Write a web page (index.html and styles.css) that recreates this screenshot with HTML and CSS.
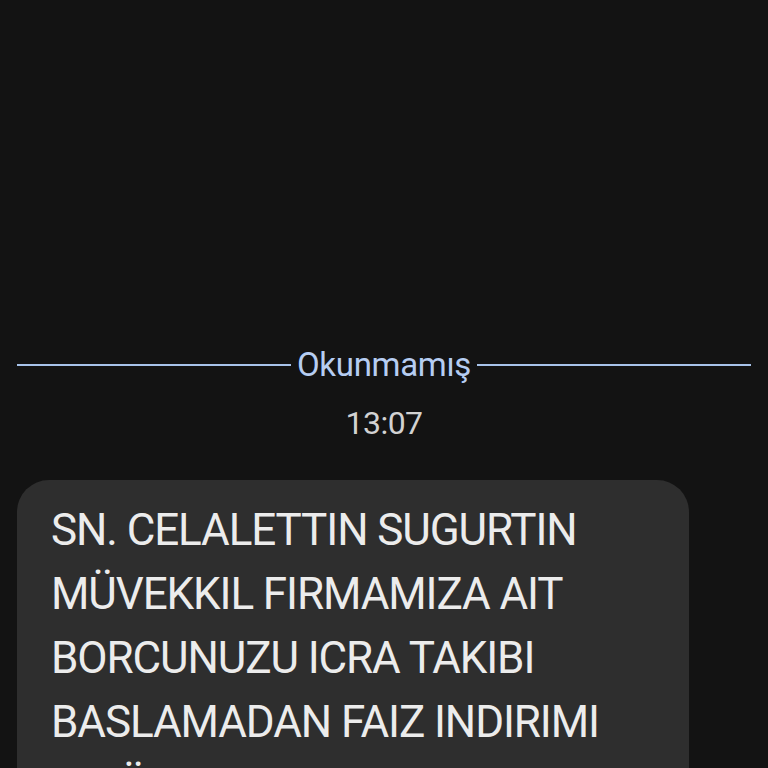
FILE: index.html
```html
<!DOCTYPE html>
<html lang="tr">
<head>
<meta charset="utf-8">
<link rel="stylesheet" href="styles.css">
</head>
<body>
<main class="thread">
  <div class="divider">
    <span class="divider-line"></span>
    <span class="divider-label">Okunmamış</span>
    <span class="divider-line"></span>
  </div>
  <div class="timestamp">13:07</div>
  <div class="bubble">
    <p class="bubble-text">SN. CELALETTIN SUGURTIN<br>MÜVEKKIL FIRMAMIZA AIT<br>BORCUNUZU ICRA TAKIBI<br>BASLAMADAN FAIZ INDIRIMI<br>ILE ÖDEMENIZ ICIN</p>
  </div>
</main>
</body>
</html>
```
FILE: styles.css
```css
html, body {
  margin: 0;
  padding: 0;
  background: #131313;
  height: 100%;
  overflow: hidden;
}
.thread {
  padding: 345px 17px 0 17px;
  font-family: Roboto, "Noto Sans", sans-serif;
}
.divider {
  display: flex;
  align-items: center;
  gap: 6px;
  height: 40px;
}
.divider-line {
  flex: 1;
  height: 2px;
  background: #a8c3ea;
}
.divider-label {
  color: #b6cdf2;
  font-size: 33px;
  line-height: 40px;
  letter-spacing: -0.3px;
}
.timestamp {
  margin-top: 18px;
  text-align: center;
  color: #d2d2d2;
  font-size: 32px;
  line-height: 40px;
  letter-spacing: -0.5px;
}
.bubble {
  margin-top: 37px;
  width: 672px;
  background: #2e2e2e;
  border-radius: 32px;
  padding: 18px 34px 20px 34px;
  box-sizing: border-box;
}
.bubble-text {
  margin: 0;
  color: #ececec;
  font-size: 44px;
  line-height: 64px;
  letter-spacing: -1.1px;
}
```
